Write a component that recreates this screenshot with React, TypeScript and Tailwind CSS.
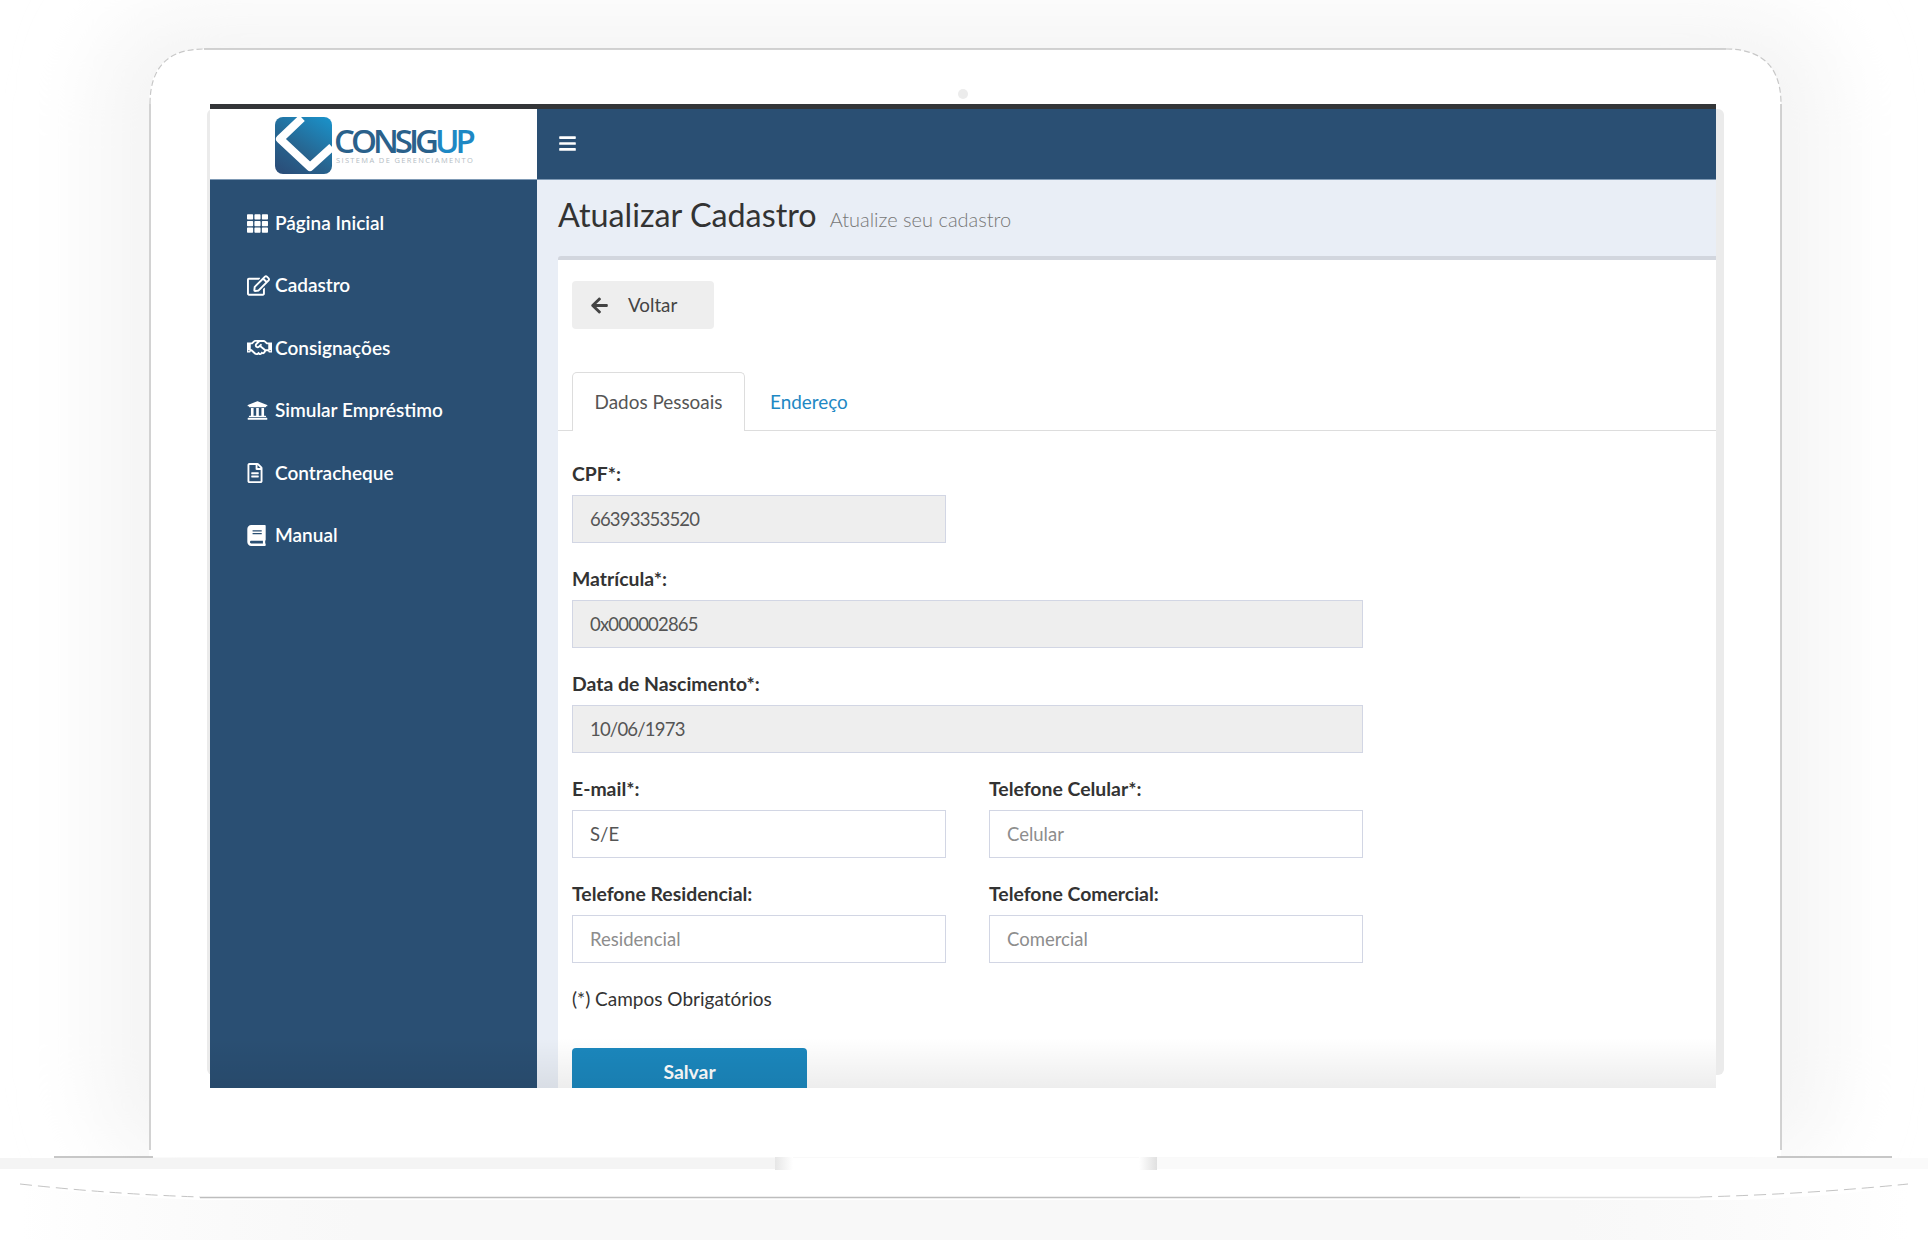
import { FaTh, FaRegEdit, FaRegHandshake, FaUniversity, FaRegFileAlt, FaBook, FaBars, FaArrowLeft } from "react-icons/fa";

const menu = [
  { label: "Página Inicial", icon: FaTh, size: "w-[21px] h-[21px]" },
  { label: "Cadastro", icon: FaRegEdit, size: "w-[23px] h-[23px]" },
  { label: "Consignações", icon: FaRegHandshake, size: "w-[25px] h-[25px]" },
  { label: "Simular Empréstimo", icon: FaUniversity, size: "w-[21px] h-[21px]" },
  { label: "Contracheque", icon: FaRegFileAlt, size: "w-[20px] h-[20px] -ml-[2px]" },
  { label: "Manual", icon: FaBook, size: "w-[21px] h-[21px] -ml-px" },
];

function LaptopFrame() {
  return (
    <svg className="absolute inset-0" width="1928" height="1240" viewBox="0 0 1928 1240" fill="none">
      <defs>
        <filter id="glow" x="-20%" y="-20%" width="140%" height="140%">
          <feGaussianBlur stdDeviation="38" />
        </filter>
        <linearGradient id="hingeL" x1="0" y1="0" x2="1" y2="0">
          <stop offset="0" stopColor="#e6e6e6" />
          <stop offset="1" stopColor="#ffffff" />
        </linearGradient>
        <linearGradient id="hingeR" x1="0" y1="0" x2="1" y2="0">
          <stop offset="0" stopColor="#ffffff" />
          <stop offset="1" stopColor="#e0e0e0" />
        </linearGradient>
        <linearGradient id="edge" x1="0" y1="0" x2="1" y2="0">
          <stop offset="0" stopColor="#f5f5f5" stopOpacity="0" />
          <stop offset="0.18" stopColor="#f8f8f8" />
          <stop offset="0.82" stopColor="#f8f8f8" />
          <stop offset="1" stopColor="#f5f5f5" stopOpacity="0" />
        </linearGradient>
      </defs>
      <rect x="95" y="10" width="1740" height="1160" rx="90" fill="#f5f5f5" filter="url(#glow)" />
      <path d="M149 1157 V104 Q149 49 204 49 H1726 Q1781 49 1781 104 V1157 Z" fill="#ffffff" />
      <path d="M150 1150 V104 M204 49 H1726 M1781 104 V1150" stroke="#c4c4c4" strokeWidth="1.5" />
      <path d="M150 104 Q150 49 204 49 M1726 49 Q1781 49 1781 104" stroke="#c8c8c8" strokeWidth="1.2" strokeDasharray="6 3" />
      <rect x="0" y="1158" width="1928" height="82" fill="#ffffff" />
      <rect x="0" y="1158" width="776" height="11" fill="#f4f4f4" />
      <rect x="1153" y="1158" width="775" height="11" fill="#fafafa" />
      <rect x="775" y="1157" width="18" height="13" fill="url(#hingeL)" />
      <rect x="1139" y="1157" width="18" height="13" fill="url(#hingeR)" />
      <path d="M54 1157 H153 M1777 1157 H1892" stroke="#b5b5b5" strokeWidth="1.5" />
      <path d="M20 1186 Q110 1197 200 1200 H1740 Q1830 1197 1908 1186 V1240 H20 Z" fill="url(#edge)" />
      <path d="M20 1184 Q110 1194 200 1197" stroke="#c4c4c4" strokeWidth="1" strokeDasharray="12 6" />
      <path d="M1700 1197 Q1810 1194 1908 1184" stroke="#c4c4c4" strokeWidth="1" strokeDasharray="12 6" />
      <path d="M200 1197.5 H1520" stroke="#bdbdbd" strokeWidth="1.5" />
      <path d="M1520 1197.5 H1700" stroke="#dedede" strokeWidth="1.5" />
      <circle cx="963" cy="94" r="5" fill="#ececec" />
    </svg>
  );
}

function Logo() {
  return (
    <div className="flex items-start h-full pt-[8px] pl-[65px]">
      <svg width="58" height="57" viewBox="0 0 58 57" className="shrink-0">
        <defs>
          <linearGradient id="mark" x1="0.85" y1="0" x2="0.2" y2="1">
            <stop offset="0" stopColor="#1b8fc6" />
            <stop offset="0.6" stopColor="#27648f" />
            <stop offset="1" stopColor="#2a4f7a" />
          </linearGradient>
        </defs>
        <rect x="0" y="0" width="57" height="57" rx="8" fill="url(#mark)" />
        <path d="M27 1 L5 22 L35 50 L57 30" stroke="#ffffff" strokeWidth="8" strokeLinejoin="round" fill="none" />
      </svg>
      <div className="flex flex-col pl-[1px] pt-[9px] font-['Open_Sans',sans-serif]">
        <div className="text-[33px] leading-[30px] font-semibold tracking-[-4px] whitespace-nowrap">
          <span className="text-[#2a618b]">CONSIG</span>
          <span className="text-[#1e88c4]">UP</span>
        </div>
        <div className="pl-[2px] text-[7.5px] leading-[8px] tracking-[1.35px] text-[#b4bcc4] whitespace-nowrap">SISTEMA DE GERENCIAMENTO</div>
      </div>
    </div>
  );
}

function Sidebar() {
  return (
    <aside className="w-[327px] shrink-0 flex flex-col">
      <div className="h-[71px] shrink-0 bg-white border-b border-[#7f9ab5]">
        <Logo />
      </div>
      <nav className="flex-1 bg-[#2a4f73] pt-[12px]">
        {menu.map((item) => (
          <div key={item.label} className="h-[62.4px] flex items-center pl-[37px] text-white text-[19px] font-semibold">
            <span className="w-[28px] shrink-0 flex items-center">
              <item.icon className={item.size} />
            </span>
            {item.label}
          </div>
        ))}
      </nav>
    </aside>
  );
}

function Field({ label, value, placeholder, disabled, className }: { label: string; value?: string; placeholder?: string; disabled?: boolean; className: string }) {
  return (
    <div className={className}>
      <div className="h-[25px] leading-[27px] text-[19.4px] font-bold text-[#333333] whitespace-nowrap">{label}</div>
      <div
        className={
          disabled
            ? "mt-[10px] h-[48px] border border-[#d2d6e4] bg-[#eeeeee] flex items-center px-[17px] pt-[2px] text-[18.5px] tracking-[-0.8px] text-[#555555]"
            : "mt-[10px] h-[48px] border border-[#d2d6e4] bg-white flex items-center px-[17px] pt-[2px] text-[18.5px] text-[#555555]"
        }
      >
        {value ? value : <span className="text-[#8d8d8d]">{placeholder}</span>}
      </div>
    </div>
  );
}

export default function App() {
  return (
    <div className="relative w-[1928px] h-[1240px] overflow-hidden bg-white font-['Lato',sans-serif]">
      <LaptopFrame />
      <div className="relative pt-[104px] pl-[210px]">
        <div className="relative w-[1506px] h-[984px]">
          {/* soft edge the screen throws on the lid */}
          <div className="absolute left-[-3px] right-[-8px] top-[5px] bottom-[13px] rounded-[6px] bg-[#ebebeb]" />
          <div className="relative w-full h-full flex flex-col overflow-hidden">
            <div className="h-[5px] shrink-0 bg-[#333538]" />
            <div className="flex flex-1 min-h-0">
              <Sidebar />
              <main className="flex-1 min-w-0 flex flex-col bg-[#e9eef6]">
                <div className="h-[71px] shrink-0 bg-[#2a4f73] border-b border-[#7f9ab5] flex items-center pl-[21px] pb-[2px] text-white">
                  <FaBars className="w-[19px] h-[19px]" />
                </div>
                <div className="h-[76px] shrink-0 flex items-center pl-[21px] pb-[6px]">
                  <h1 className="text-[32.3px] text-[#333333] leading-none whitespace-nowrap">Atualizar Cadastro</h1>
                  <span className="ml-[13px] mt-[7px] text-[20px] font-light text-[#777777] whitespace-nowrap">Atualize seu cadastro</span>
                </div>
                <div className="flex-1 min-h-0 ml-[21px] bg-white border-t-4 border-[#d2d6de] rounded-tl-[3px] pt-[21px]">
                  <button className="ml-[14px] w-[142px] h-[48px] bg-[#eeeeee] rounded-[4px] flex items-center pl-[18px] text-[18.8px] text-[#444444]">
                    <FaArrowLeft className="w-[19px] h-[19px]" />
                    <span className="ml-[19px]">Voltar</span>
                  </button>
                  <div className="mt-[43px] pl-[14px] h-[59px] flex border-b border-[#dddddd]">
                    <div className="w-[173px] h-[59px] shrink-0 bg-white border border-b-0 border-[#dddddd] rounded-t-[5px] flex items-center justify-center text-[18.9px] text-[#555555]">
                      Dados Pessoais
                    </div>
                    <div className="ml-[25px] pt-[2px] flex items-center text-[18.9px] text-[#1e88c4]">Endereço</div>
                  </div>
                  <div className="pl-[14px] w-[805px] pt-[29px] grid grid-cols-2 gap-x-[43px] gap-y-[22px]">
                    <Field className="col-span-1" label="CPF*:" value="66393353520" disabled />
                    <div />
                    <Field className="col-span-2" label="Matrícula*:" value="0x000002865" disabled />
                    <Field className="col-span-2" label="Data de Nascimento*:" value="10/06/1973" disabled />
                    <Field className="col-span-1" label="E-mail*:" value="S/E" />
                    <Field className="col-span-1" label="Telefone Celular*:" placeholder="Celular" />
                    <Field className="col-span-1" label="Telefone Residencial:" placeholder="Residencial" />
                    <Field className="col-span-1" label="Telefone Comercial:" placeholder="Comercial" />
                  </div>
                  <p className="pl-[14px] mt-[23px] text-[19px] leading-[25px] text-[#333333]">(*) Campos Obrigatórios</p>
                  <button className="ml-[14px] mt-[37px] w-[235px] h-[48px] bg-[#1b87bd] rounded-[4px] text-white text-[19.4px] font-bold">
                    Salvar
                  </button>
                </div>
              </main>
            </div>
            <div className="absolute left-0 right-0 bottom-0 h-[50px] bg-gradient-to-b from-transparent to-black/7" />
          </div>
        </div>
      </div>
    </div>
  );
}
